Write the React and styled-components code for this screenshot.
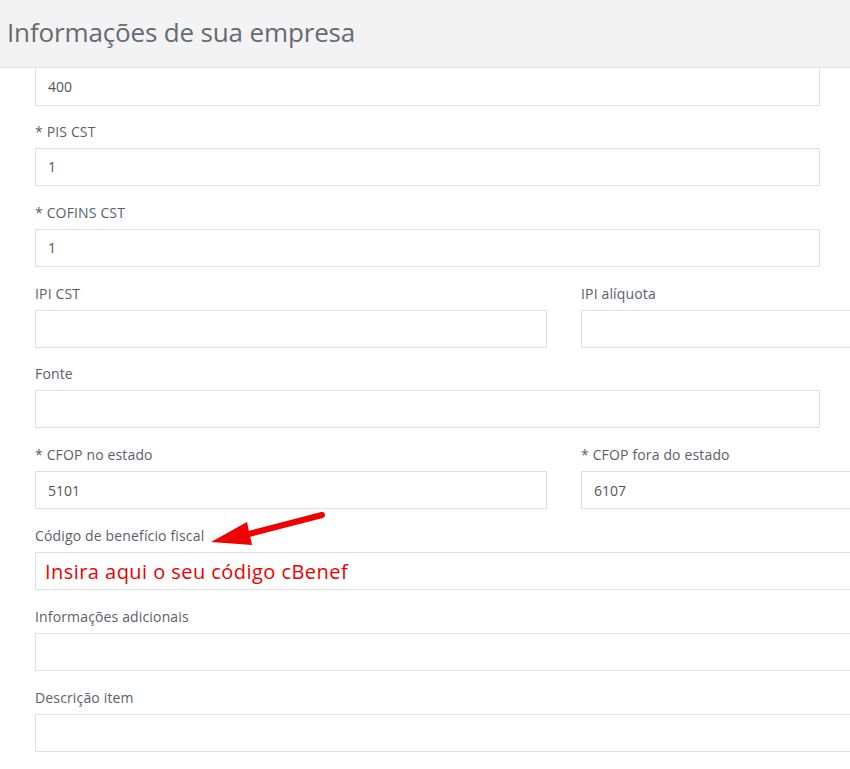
import React from 'react'
import styled, { createGlobalStyle } from 'styled-components'

const GlobalStyle = createGlobalStyle`
  html, body {
    margin: 0;
    padding: 0;
    background: #fff;
    overflow: hidden;
  }
  body {
    font-family: "Open Sans", "Noto Sans", sans-serif;
  }
`

const fields = [
  { rows: [{ label: '* PIS CST', value: '1', span: 9 }] },
  { rows: [{ label: '* COFINS CST', value: '1', span: 9 }] },
  { rows: [{ label: 'IPI CST', value: '', span: 6 }, { label: 'IPI alíquota', value: '', span: 6 }] },
  { rows: [{ label: 'Fonte', value: '', span: 9 }] },
  { rows: [{ label: '* CFOP no estado', value: '5101', span: 6 }, { label: '* CFOP fora do estado', value: '6107', span: 6 }] },
  { rows: [{ label: 'Código de benefício fiscal', value: '', span: 12, hint: 'Insira aqui o seu código cBenef' }] },
  { rows: [{ label: 'Informações adicionais', value: '', span: 12 }] },
  { rows: [{ label: 'Descrição item', value: '', span: 12 }] },
]

function App() {
  return (
    <Page>
      <GlobalStyle />
      <Header>
        <Title>Informações de sua empresa</Title>
      </Header>
      <Form>
        <Row>
          <Col span={9}>
            <TopInput>400</TopInput>
          </Col>
        </Row>
        {fields.map((f, i) => (
          <Row key={i}>
            {f.rows.map((c, j) => (
              <Col key={j} span={c.span}>
                <Group>
                  <Label>{c.label}</Label>
                  <Input>
                    {c.value}
                    {c.hint && <Hint>{c.hint}</Hint>}
                  </Input>
                  {c.hint && (
                    <Arrow width="120" height="40" viewBox="0 0 120 40">
                      <line x1="113" y1="5" x2="40" y2="24" stroke="#f20000" strokeWidth="6" strokeLinecap="round" />
                      <polygon points="2,32 38,12 43,35" fill="#f20000" />
                    </Arrow>
                  )}
                </Group>
              </Col>
            ))}
          </Row>
        ))}
      </Form>
    </Page>
  )
}

export default App

const Page = styled.div`
  width: 850px;
  height: 769px;
  overflow: hidden;
`

const Header = styled.div`
  height: 67px;
  background: #f3f3f3;
  border-bottom: 1px solid #e3e3e3;
  display: flex;
  align-items: center;
  padding-left: 7px;
`

const Title = styled.h1`
  margin: 0;
  font-size: 26px;
  font-weight: 400;
  color: #656b73;
  letter-spacing: -0.15px;
  padding-bottom: 3px;
`

const Form = styled.div`
  width: 1092px;
  padding-left: 18px;
`

const Row = styled.div`
  display: flex;
`

const Col = styled.div`
  width: ${props => (props.span / 12) * 100}%;
  padding: 0 17px;
  box-sizing: border-box;
`

const Group = styled.div`
  position: relative;
  padding-top: 16.86px;
`

const Label = styled.div`
  font-size: 14px;
  line-height: 20px;
  color: #59616b;
  margin-bottom: 6px;
  letter-spacing: 0.15px;
`

const Input = styled.div`
  height: 38px;
  box-sizing: border-box;
  border: 1px solid #dde1e4;
  background: #fff;
  padding: 0 12px;
  display: flex;
  align-items: center;
  font-size: 14px;
  color: #555;
`

const TopInput = styled(Input)`
  height: 38px;
  border-top: none;
  margin-bottom: -1px;
`

const Hint = styled.span`
  color: #ee0000;
  font-size: 20px;
  margin-left: -3px;
  letter-spacing: 0.45px;
`

const Arrow = styled.svg`
  position: absolute;
  left: 174px;
  top: 1px;
`
